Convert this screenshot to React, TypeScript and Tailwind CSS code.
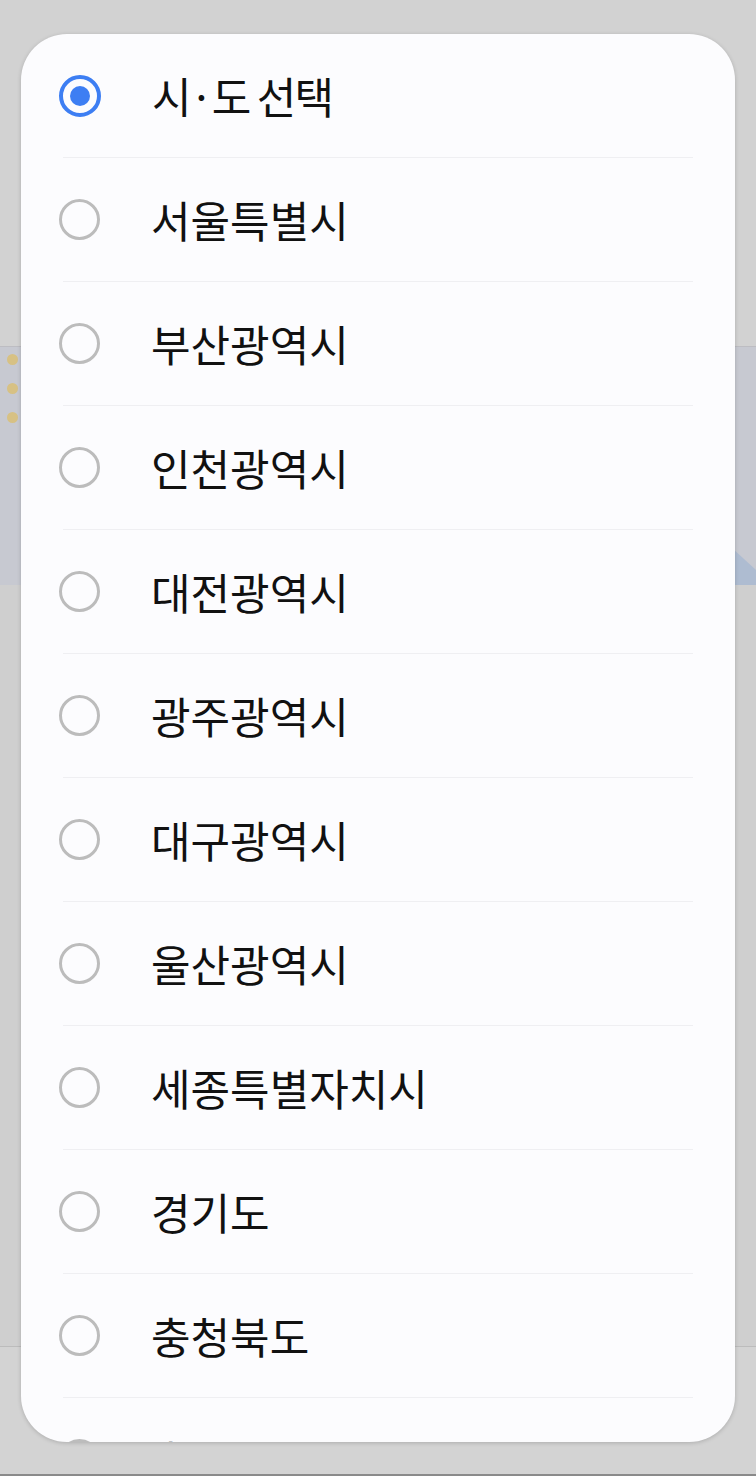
const regions = [
  "서울특별시",
  "부산광역시",
  "인천광역시",
  "대전광역시",
  "광주광역시",
  "대구광역시",
  "울산광역시",
  "세종특별자치시",
  "경기도",
  "충청북도",
  "충청남도",
]

function Radio({ checked }: { checked: boolean }) {
  if (checked) {
    return (
      <div className="flex h-[42px] w-[42px] shrink-0 items-center justify-center rounded-full border-[4px] border-[#3d7ef3]">
        <div className="h-[20px] w-[20px] rounded-full bg-[#3d7ef3]" />
      </div>
    )
  }
  return <div className="h-[41px] w-[41px] shrink-0 rounded-full border-[3px] border-[#bcbcbc]" />
}

function Row({ checked, label }: { checked: boolean; label: string }) {
  return (
    <div className="flex h-[123px] items-center pl-[38px]">
      <Radio checked={checked} />
      <span className={`ml-[51px] text-[43px] leading-none text-[#111] ${checked ? "tracking-[-2px]" : ""}`}>{label}</span>
    </div>
  )
}

export default function App() {
  return (
    <div className="relative h-[1476px] w-[756px] overflow-hidden bg-[#d2d2d2] font-['Noto_Sans_CJK_KR','Noto_Sans',sans-serif]">
      {/* dimmed page behind the dialog */}
      <div className="flex h-full flex-col">
        <div className="h-[347px] border-b border-[#bdbdc2]" />
        <div className="relative h-[238px] bg-[#c7c9d1]">
          <div className="flex w-[24px] flex-col items-center gap-[18px] pt-[7px]">
            <div className="h-[11px] w-[11px] rounded-full bg-[#d7c184]" />
            <div className="h-[11px] w-[11px] rounded-full bg-[#d7c184]" />
            <div className="h-[11px] w-[11px] rounded-full bg-[#d7c184]" />
          </div>
          <svg className="absolute bottom-0 right-0" width="60" height="70" viewBox="0 0 60 70">
            <polygon points="0,0 60,55 60,70 0,70" fill="#aebcd1" />
          </svg>
        </div>
        <div className="h-[762px] border-b border-[#bcbcbc] bg-[#cfcfcf]" />
        <div className="flex-1 border-b-2 border-[#8a8a8a] bg-[#d3d3d3]" />
      </div>

      {/* dialog */}
      <div className="absolute left-[21px] top-[34px] h-[1408px] w-[714px] overflow-hidden rounded-[46px] bg-[#fcfcfe] shadow-[0_1px_4px_rgba(0,0,0,0.18)]">
        <Row checked label="시·도 선택" />
        {regions.map((name) => (
          <div key={name}>
            <div className="mx-[42px] h-px bg-[#efeff2]" />
            <Row checked={false} label={name} />
          </div>
        ))}
      </div>
    </div>
  )
}
